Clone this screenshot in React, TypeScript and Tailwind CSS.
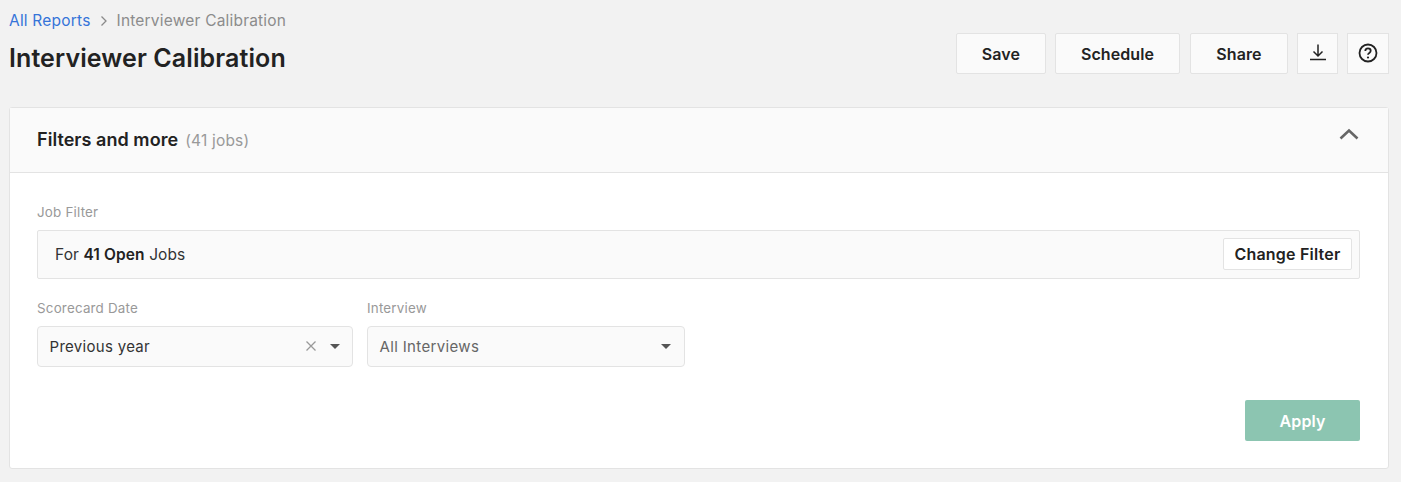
import React from "react";

const font = { fontFamily: "Inter, 'Liberation Sans', sans-serif" };

function Caret() {
  return (
    <svg width="10" height="5" viewBox="0 0 10 5" className="shrink-0">
      <path d="M0 0h10L5 5z" fill="#555" />
    </svg>
  );
}

export default function App() {
  return (
    <div className="h-[482px] w-[1401px] overflow-hidden bg-[#f2f2f2] text-[#222]" style={font}>
      <div className="flex justify-between pl-[9px] pr-[12px] pt-[11px]">
        <div>
          <div className="flex h-[19px] items-center text-[15.500px] tracking-[0.2px]">
            <span className="text-[#3574d9]">All Reports</span>
            <svg width="8" height="12" viewBox="0 0 8 12" className="ml-[9px] mr-[9px]">
              <path d="M1.500 1.500 6 6l-4.500 4.500" fill="none" stroke="#8a8a8a" strokeWidth="1.300" />
            </svg>
            <span className="text-[#8c8c8c]">Interviewer Calibration</span>
          </div>
          <h1 className="mt-[8px] text-[25px] leading-[40px] font-semibold tracking-[0.1px] text-[#222]">Interviewer Calibration</h1>
        </div>
        <div className="mt-[22px] flex h-[41px]">
          <button className="h-full w-[90px] rounded-[2px] border border-[#e3e3e3] bg-[#fafafa] pt-px text-[16px] font-semibold tracking-[0.1px]">Save</button>
          <button className="ml-[9px] h-full w-[125px] rounded-[2px] border border-[#e3e3e3] bg-[#fafafa] pt-px text-[16px] font-semibold tracking-[0.1px]">Schedule</button>
          <button className="ml-[10px] h-full w-[98px] rounded-[2px] border border-[#e3e3e3] bg-[#fafafa] pt-px text-[16px] font-semibold tracking-[0.1px]">Share</button>
          <button className="ml-[9px] flex h-full w-[41px] items-center justify-center border border-[#e3e3e3] bg-[#fafafa]">
            <svg width="18" height="18" viewBox="0 0 18 18" className="mb-[3px]">
              <path d="M9 1.500v11M4.500 8.500 9 13l4.500-4.500M1 16.500h16" fill="none" stroke="#222" strokeWidth="1.500" />
            </svg>
          </button>
          <button className="ml-[9px] flex h-full w-[42px] items-center justify-center border border-[#e3e3e3] bg-[#fafafa]">
            <svg width="20" height="20" viewBox="0 0 20 20" className="mb-[2px]">
              <circle cx="10" cy="10" r="8.500" fill="none" stroke="#222" strokeWidth="1.800" />
              <path d="M7.300 8c0-1.600 1.200-2.600 2.700-2.600s2.700 1 2.700 2.400c0 2.200-2.700 2-2.700 4" fill="none" stroke="#222" strokeWidth="1.800" />
              <circle cx="10" cy="14.500" r="1.100" fill="#222" />
            </svg>
          </button>
        </div>
      </div>

      <div className="ml-[9px] mt-[29px] h-[362px] w-[1380px] rounded-[3px] border border-[#e3e3e3] bg-white">
        <div className="flex h-[65px] items-center justify-between border-b border-[#e3e3e3] bg-[#fafafa] pl-[27px] pr-[29px]">
          <div className="mb-[2px] flex items-baseline">
            <span className="text-[18px] font-semibold tracking-[0.05px]">Filters and more</span>
            <span className="ml-[7px] text-[15.500px] tracking-[0.2px] text-[#999]">(41 jobs)</span>
          </div>
          <svg width="20" height="12" viewBox="0 0 20 12" className="mb-[12px]">
            <path d="M1.500 10.500 10 2.500l8.500 8" fill="none" stroke="#666" strokeWidth="2.600" />
          </svg>
        </div>
        <div className="pl-[27px] pr-[28px] pt-[31px]">
          <div className="text-[13.400px] leading-[16px] tracking-[0.2px] text-[#999]">Job Filter</div>
          <div className="mt-[10px] flex h-[49px] items-center justify-between rounded-[2px] border border-[#e3e3e3] bg-[#fafafa] pl-[17px] pr-[7px]">
            <div className="text-[15.500px] tracking-[0.1px] text-[#333]">
              For <span className="font-semibold text-[#222]">41 Open</span> Jobs
            </div>
            <button className="mb-[1px] h-[32px] w-[129px] rounded-[2px] border border-[#e3e3e3] bg-white text-[16px] font-semibold tracking-[0.2px]">Change Filter</button>
          </div>
          <div className="mt-[21px] flex gap-[14px]">
            <div className="w-[316px]">
              <div className="text-[13.400px] leading-[16px] tracking-[0.2px] text-[#999]">Scorecard Date</div>
              <div className="mt-[10px] flex h-[41px] items-center rounded-[4px] border border-[#e3e3e3] bg-[#fafafa] pl-[11.500px] pr-[12px]">
                <span className="flex-1 pt-px text-[15px] tracking-[0.3px] text-[#333]">Previous year</span>
                <svg width="10" height="10" viewBox="0 0 10 10" className="mb-[2px] mr-[14px]">
                  <path d="M.5.500l9 9M9.500.500l-9 9" stroke="#999" strokeWidth="1.300" />
                </svg>
                <Caret />
              </div>
            </div>
            <div className="w-[318px]">
              <div className="text-[13.400px] leading-[16px] tracking-[0.2px] text-[#999]">Interview</div>
              <div className="mt-[10px] flex h-[41px] items-center rounded-[4px] border border-[#e3e3e3] bg-[#fafafa] pl-[11.500px] pr-[13px]">
                <span className="flex-1 pt-px text-[15px] tracking-[0.35px] text-[#666]">All Interviews</span>
                <Caret />
              </div>
            </div>
          </div>
          <div className="mt-[33px] flex justify-end">
            <button className="h-[41px] w-[115px] rounded-[2px] bg-[#8cc5b1] pt-px text-[16px] font-semibold tracking-[0.1px] text-white">Apply</button>
          </div>
        </div>
      </div>
    </div>
  );
}
